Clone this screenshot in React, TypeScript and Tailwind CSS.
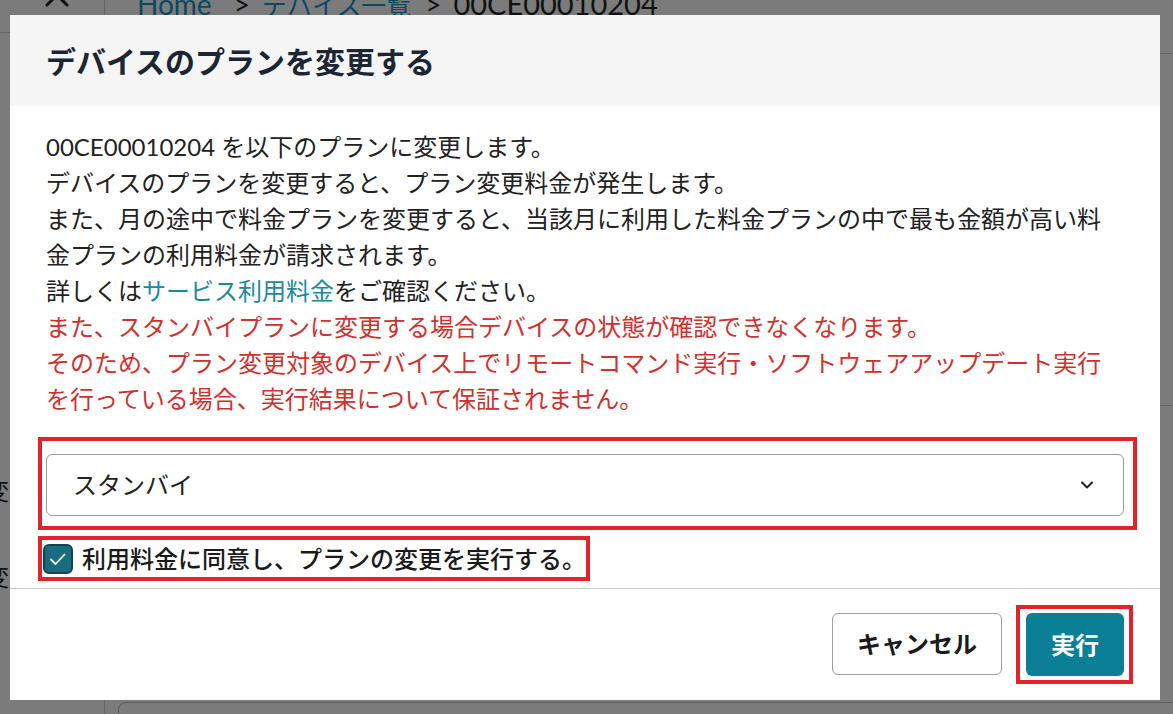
import React from "react";

function ChevronDown() {
  return (
    <svg width="12" height="8" viewBox="0 0 12 8" fill="none">
      <path d="M1 1.5 L6 6.5 L11 1.5" stroke="#222" strokeWidth="2" strokeLinecap="round" strokeLinejoin="round" />
    </svg>
  );
}

function CheckIcon() {
  return (
    <svg width="26" height="26" viewBox="0 0 26 26" fill="none">
      <path d="M6 13.5 L10.5 18 L19.5 8.5" stroke="#ffffff" strokeWidth="1.8" strokeLinecap="round" strokeLinejoin="round" />
    </svg>
  );
}

export default function App() {
  return (
    <div className="relative w-[1173px] h-[714px] overflow-hidden bg-[#7b7b7b] font-['Lato','Noto_Sans_CJK_JP',sans-serif]">
      {/* dimmed page behind the dialog */}
      <div className="absolute left-[104px] top-0 h-full w-px bg-[#676767]" />
      <div className="absolute left-0 top-[32px] w-[104px] h-px bg-[#676767]" />
      <svg className="absolute left-[45px] top-[-17px]" width="24" height="24" viewBox="0 0 24 24" fill="none">
        <path d="M2 2 L22 22 M22 2 L2 22" stroke="#111" strokeWidth="3" strokeLinecap="round" />
      </svg>
      <div className="absolute left-[137px] top-[-11px] flex items-baseline whitespace-nowrap leading-none">
        <span className="text-[28px] text-[#0b4862]">Home</span>
        <span className="ml-[22px] text-[28px] text-[#111]">&gt;</span>
        <span className="ml-[12px] text-[25px] text-[#0b4862] underline decoration-1 underline-offset-2">デバイス一覧</span>
        <span className="ml-[14px] text-[28px] text-[#111]">&gt;</span>
        <span className="ml-[12px] text-[29px] text-[#111]">00CE00010204</span>
      </div>
      <div className="absolute left-[1160px] top-[53px] w-[20px] h-px bg-[#666]" />
      <div className="absolute left-[1160px] top-[405px] w-[20px] h-px bg-[#666]" />
      <div className="absolute left-[-15px] top-[479px] text-[24px] leading-none text-[#111]">変</div>
      <div className="absolute left-[-15px] top-[565px] text-[24px] leading-none text-[#111]">変</div>
      <div className="absolute left-[118px] top-[702px] w-[1100px] h-[100px] border border-[#5e5e5e] rounded-[8px]" />

      {/* dialog */}
      <div className="absolute left-[10px] top-[15px] w-[1150px] h-[685px] bg-white flex flex-col">
        <div className="h-[91px] shrink-0 bg-[#f5f5f5] flex items-center px-[36px]">
          <h2 className="text-[30px] font-bold leading-none text-[#1b2533]">デバイスのプランを変更する</h2>
        </div>

        <div className="px-[36px] pt-[23px]">
          <div className="text-[24px] leading-[36px] text-[#222]">
            <p>00CE00010204 を以下のプランに変更します。</p>
            <p>デバイスのプランを変更すると、プラン変更料金が発生します。</p>
            <p>
              また、月の途中で料金プランを変更すると、当該月に利用した料金プランの中で最も金額が高い料
              <br />
              金プランの利用料金が請求されます。
            </p>
            <p>
              詳しくは<span className="text-[#1b8a9c]">サービス利用料金</span>をご確認ください。
            </p>
            <p className="text-[#d2302d]">また、スタンバイプランに変更する場合デバイスの状態が確認できなくなります。</p>
            <p className="text-[#d2302d]">
              そのため、プラン変更対象のデバイス上でリモートコマンド実行・ソフトウェアアップデート実行
              <br />
              を行っている場合、実行結果について保証されません。
            </p>
          </div>

          <div className="mt-[20px] ml-[-8px] w-[1099px] h-[93px] border-[4px] border-[#e3222b] pt-[13px] pl-[4px]">
            <div className="w-[1078px] h-[62px] rounded-[6px] border border-[#9c9c9c] flex items-center justify-between pl-[26px] pr-[30px]">
              <span className="text-[24px] leading-none text-[#222]">スタンバイ</span>
              <ChevronDown />
            </div>
          </div>

          <div className="mt-[6px] ml-[-8px] w-[552px] h-[45px] border-[4px] border-[#e3222b] flex items-center pl-[1px] gap-[9px]">
            <div className="w-[30px] h-[30px] shrink-0 rounded-[6px] bg-[#176d7e] border-2 border-[#0e4553] flex items-center justify-center">
              <CheckIcon />
            </div>
            <span className="text-[24px] leading-none font-medium text-[#1a1a1a] whitespace-nowrap">利用料金に同意し、プランの変更を実行する。</span>
          </div>
        </div>

        <div className="mt-[7px] h-px bg-[#c8c8c8]" />

        <div className="flex-1 flex justify-end items-start pt-[24px] pr-[36px] gap-[24px]">
          <button className="w-[170px] h-[62px] rounded-[6px] border border-[#a0a0a0] bg-white text-[24px] font-bold text-[#1a1a1a] leading-none">
            キャンセル
          </button>
          <div className="relative">
            <button className="w-[98px] h-[63px] rounded-[6px] bg-[#0b7f95] text-[24px] font-bold text-white leading-none">
              実行
            </button>
            <div className="absolute left-[-10px] top-[-8px] right-[-9px] bottom-[-8px] border-[4px] border-[#e3222b] pointer-events-none" />
          </div>
        </div>
      </div>
    </div>
  );
}
